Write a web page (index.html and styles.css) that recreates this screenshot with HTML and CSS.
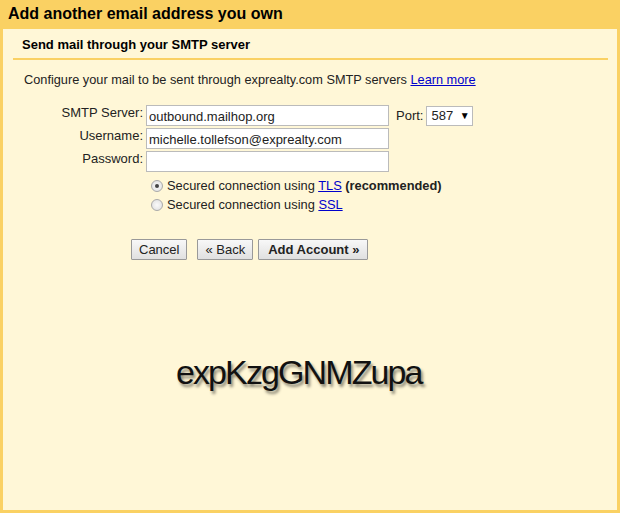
FILE: index.html
```html
<!DOCTYPE html>
<html lang="en">
<head>
    <meta charset="UTF-8">
    <title>Add another email address you own</title>
    <link rel="stylesheet" href="styles.css">
</head>
<body>
    <div class="dialog">
        <h1 class="dialog-title">Add another email address you own</h1>
        <div class="dialog-body">
            <h2 class="section-title">Send mail through your SMTP server</h2>
            <p class="intro">Configure your mail to be sent through exprealty.com SMTP servers <a href="#">Learn more</a></p>

            <div class="form-grid">
                <label class="field-label">SMTP Server:</label>
                <div class="field-row">
                    <input type="text" class="field" value="outbound.mailhop.org">
                    <label class="port-label">Port:</label>
                    <div class="port-select">587 <span class="arrow">&#9660;</span></div>
                </div>

                <label class="field-label">Username:</label>
                <div class="field-row">
                    <input type="text" class="field" value="michelle.tollefson@exprealty.com">
                </div>

                <label class="field-label">Password:</label>
                <div class="field-row">
                    <input type="password" class="field">
                </div>
            </div>

            <div class="options">
                <label class="option"><span class="radio checked"></span><span>Secured connection using <a href="#">TLS</a> <b>(recommended)</b></span></label>
                <label class="option"><span class="radio"></span><span>Secured connection using <a href="#">SSL</a></span></label>
            </div>

            <div class="actions">
                <button class="btn">Cancel</button>
                <button class="btn btn-back">&laquo; Back</button>
                <button class="btn btn-primary">Add Account &raquo;</button>
            </div>

            <div class="captcha">expKzgGNMZupa</div>
        </div>
    </div>
</body>
</html>
```

FILE: styles.css
```css
* {
    box-sizing: border-box;
    margin: 0;
    padding: 0;
}

body {
    font-family: Arial, "Liberation Sans", sans-serif;
    font-size: 13px;
    color: #222;
    background: #fad163;
}

.dialog {
    height: 513px;
    background-color: #fad163;
    padding: 0 3px 3px 3px;
    display: flex;
    flex-direction: column;
}

.dialog-title {
    height: 29px;
    padding: 5px 0 0 5px;
    font-size: 16px;
    font-weight: bold;
    color: #000;
}

.dialog-body {
    flex: 1;
    background-color: #fff7d7;
    padding: 0 9px 0 10px;
}

.section-title {
    font-size: 13px;
    font-weight: bold;
    color: #000;
    padding: 8px 0 0 9px;
    height: 31px;
    border-bottom: 2px solid #fad163;
}

.intro {
    padding: 12px 0 0 11px;
    line-height: 16px;
    font-size: 12.75px;
}

a {
    color: #00c;
}

.form-grid {
    display: grid;
    grid-template-columns: 130px auto;
    column-gap: 3px;
    row-gap: 2px;
    margin-top: 17px;
}

.field-label {
    text-align: right;
    line-height: 16px;
}

.field-row {
    display: flex;
    align-items: flex-start;
}

.field {
    width: 243px;
    height: 21px;
    border: 1px solid #bbb;
    background: #fff;
    font-family: Arial, "Liberation Sans", sans-serif;
    font-size: 13px;
    color: #222;
    padding: 1px 2px 0;
}

.port-label {
    margin: 3px 0 0 7px;
}

.port-select {
    margin: 1px 0 0 3px;
    width: 47px;
    height: 20px;
    border: 1px solid #bbb;
    background: #fff;
    padding: 1px 0 0 4px;
}

.arrow {
    font-size: 10px;
    margin-left: 3px;
    color: #000;
    vertical-align: 1px;
}

.options {
    margin: 4px 0 0 138px;
    font-size: 12.85px;
}

.option {
    display: flex;
    align-items: center;
    height: 19px;
}

.radio {
    width: 12px;
    height: 12px;
    border-radius: 50%;
    border: 1px solid #aaa;
    background: radial-gradient(circle, #fafafa, #ddd);
    margin-right: 4px;
    position: relative;
}

.radio.checked::after {
    content: "";
    position: absolute;
    left: 3px;
    top: 3px;
    width: 4px;
    height: 4px;
    border-radius: 50%;
    background: #444;
}

.actions {
    display: flex;
    margin: 25px 0 0 118px;
}

.btn {
    height: 21px;
    border: 1px solid #999;
    border-radius: 1px;
    background: linear-gradient(#f8f8f8, #e0e0e0);
    font-family: Arial, "Liberation Sans", sans-serif;
    font-size: 13px;
    color: #222;
    padding: 0 7px;
}

.btn-back {
    margin-left: 10px;
}

.btn-primary {
    margin-left: 5px;
    padding: 0 8px 0 9px;
    font-weight: bold;
}

.captcha {
    margin: 93px 0 0 163px;
    font-size: 34px;
    letter-spacing: -1.9px;
    color: #111;
    text-shadow: 2px 3px 3px rgba(0, 0, 0, 0.45);
}
```
